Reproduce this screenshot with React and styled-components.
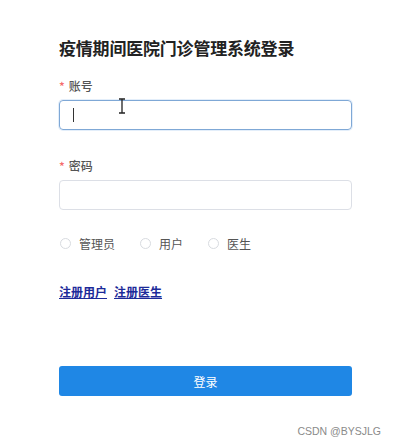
import React from 'react'
import styled, { createGlobalStyle } from 'styled-components'

const GlobalStyle = createGlobalStyle`
  body {
    margin: 0;
    background: #ffffff;
    font-family: "Noto Sans CJK SC", "Liberation Sans", sans-serif;
  }
`

const Page = styled.div`
  position: relative;
  width: 398px;
  height: 445px;
  overflow: hidden;
  background: #fff;
`

const Form = styled.div`
  display: flex;
  flex-direction: column;
  width: 293px;
  padding: 36px 0 0 59px;
`

const Title = styled.h1`
  margin: 0;
  font-size: 17px;
  line-height: 24px;
  font-weight: 700;
  color: #222;
  letter-spacing: -0.2px;
`

const Label = styled.div`
  display: flex;
  align-items: center;
  margin-top: ${p => p.$top}px;
  height: 16px;
  font-size: 12px;
  line-height: 16px;
  color: #555;
  font-weight: 500;
`

const Star = styled.span`
  color: #f56c6c;
  margin-right: 4px;
  font-size: 12px;
`

const InputBox = styled.div`
  position: relative;
  box-sizing: border-box;
  margin-top: 6px;
  height: 30px;
  border: 1px solid ${p => (p.$focus ? '#7fa8d6' : '#dcdfe6')};
  border-radius: 4px;
  box-shadow: ${p => (p.$focus ? '0 0 0 1px rgba(64,140,220,0.15)' : 'none')};
`

const Caret = styled.span`
  position: absolute;
  left: 13px;
  top: 7px;
  width: 1px;
  height: 14px;
  background: #333;
`

const Pointer = styled.svg`
  position: absolute;
  left: 58px;
  top: -3px;
`

const RadioRow = styled.div`
  display: flex;
  align-items: center;
  gap: 24px;
  margin-top: 25px;
  height: 16px;
`

const RadioItem = styled.label`
  display: flex;
  align-items: center;
  gap: 8px;
  font-size: 12px;
  color: #555;
`

const Circle = styled.span`
  box-sizing: border-box;
  width: 11px;
  height: 11px;
  border: 1px solid #d8dbe0;
  border-radius: 50%;
  margin-left: 1px;
`

const Links = styled.div`
  display: flex;
  gap: 7px;
  margin-top: 33px;
`

const Link = styled.a`
  font-size: 12px;
  line-height: 16px;
  font-weight: 700;
  color: #1c2a99;
  text-decoration: underline;
`

const Button = styled.button`
  margin-top: 66px;
  height: 30px;
  border: none;
  border-radius: 3px;
  background: #1f87e5;
  color: #fff;
  font-family: inherit;
  font-size: 12px;
`

const Watermark = styled.div`
  position: absolute;
  right: 17px;
  bottom: 8px;
  font-family: "Liberation Sans", sans-serif;
  font-size: 10.5px;
  color: #8a8a8a;
`

export default function App() {
  return (
    <Page>
      <GlobalStyle />
      <Form>
        <Title>疫情期间医院门诊管理系统登录</Title>
        <Label $top={18}><Star>*</Star>账号</Label>
        <InputBox $focus>
          <Caret />
          <Pointer width="8" height="16" viewBox="0 0 8 16">
            <path d="M1 1h6M4 1v14M1 15h6" stroke="#222" strokeWidth="1.3" fill="none" />
          </Pointer>
        </InputBox>
        <Label $top={28}><Star>*</Star>密码</Label>
        <InputBox />
        <RadioRow>
          <RadioItem><Circle />管理员</RadioItem>
          <RadioItem><Circle />用户</RadioItem>
          <RadioItem><Circle />医生</RadioItem>
        </RadioRow>
        <Links>
          <Link href="#">注册用户</Link>
          <Link href="#">注册医生</Link>
        </Links>
        <Button>登录</Button>
      </Form>
      <Watermark>CSDN @BYSJLG</Watermark>
    </Page>
  )
}
